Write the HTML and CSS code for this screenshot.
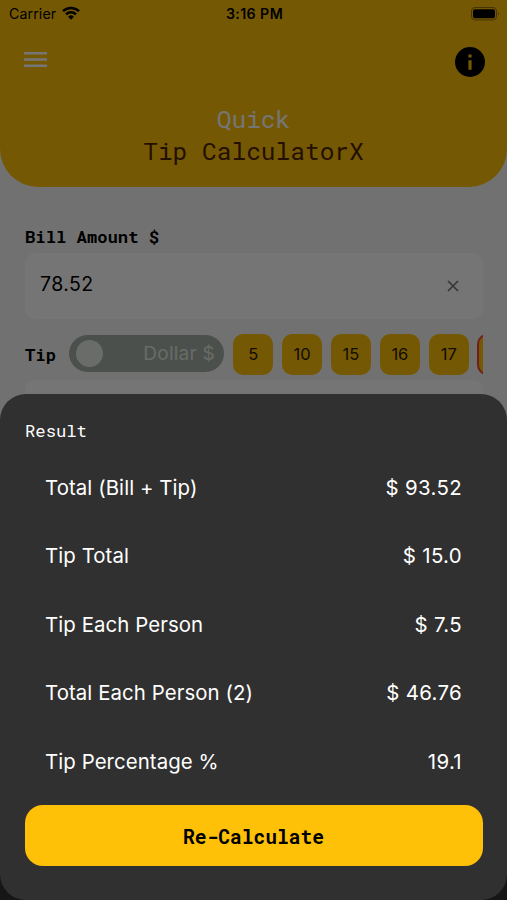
FILE: index.html
```
<!DOCTYPE html>
<html lang="en">
<head>
    <meta charset="UTF-8">
    <title>Quick Tip CalculatorX</title>
    <link rel="stylesheet" href="styles.css">
</head>
<body>
<header class="header">
    <div class="status-bar">
        <div class="carrier">
            <span>Carrier</span>
            <svg class="wifi" viewBox="0 0 18 14">
                <g fill="none" stroke="#000" stroke-width="2.5">
                    <path d="M1 5.2a11.4 11.4 0 0 1 16 0"/>
                    <path d="M4 8.3a7.1 7.1 0 0 1 10 0"/>
                </g>
                <path d="M9 13.7l-2.9-3a4.1 4.1 0 0 1 5.8 0z"/>
            </svg>
        </div>
        <span class="time">3:16 PM</span>
        <svg class="battery" viewBox="0 0 29 14">
            <rect x=".5" y=".5" width="25" height="12.5" rx="3.5" fill="none" stroke="#000" stroke-opacity=".4"/>
            <rect x="2" y="2.2" width="22" height="9" rx="2"/>
            <path d="M27 4.8q1.6 2 0 4z" opacity=".5"/>
        </svg>
    </div>
    <nav class="nav">
        <svg class="menu-icon" viewBox="0 0 23 16">
            <path d="M0 1.3h23M0 7.5h23M0 13.7h23" stroke="#fff" stroke-width="2.6"/>
        </svg>
        <svg class="info-icon" viewBox="0 0 30 30">
            <circle cx="15" cy="15" r="15"/>
            <path d="M13.4 7.4h3.2v3h-3.2zM13.4 13.2h3.2v9.6h-3.2z" fill="#ffc107"/>
        </svg>
    </nav>
    <h1 class="title"><span>Quick</span><br>Tip CalculatorX</h1>
</header>

<main class="form">
    <label class="label">Bill Amount $</label>
    <div class="field">
        <span>78.52</span>
        <svg class="clear" viewBox="0 0 12 12">
            <path d="M1 1l10 10M11 1L1 11" fill="none" stroke="#777" stroke-width="1.7"/>
        </svg>
    </div>
    <div class="tip-row">
        <span class="label">Tip</span>
        <div class="toggle">
            <span class="knob"></span>
            <span>Dollar $</span>
        </div>
        <div class="chips">
            <button class="chip">5</button>
            <button class="chip">10</button>
            <button class="chip">15</button>
            <button class="chip">16</button>
            <button class="chip">17</button>
            <button class="chip selected"></button>
        </div>
    </div>
    <div class="field"></div>
</main>
<footer class="footer"></footer>

<div class="overlay">
    <section class="sheet">
        <h2 class="sheet-title">Result</h2>
        <div class="results">
            <div class="row"><span>Total (Bill + Tip)</span><span class="value">$ 93.52</span></div>
            <div class="row"><span>Tip Total</span><span class="value">$ 15.0</span></div>
            <div class="row"><span>Tip Each Person</span><span class="value">$ 7.5</span></div>
            <div class="row"><span>Total Each Person (2)</span><span class="value">$ 46.76</span></div>
            <div class="row"><span>Tip Percentage %</span><span class="value">19.1</span></div>
        </div>
        <button class="recalculate">Re-Calculate</button>
    </section>
</div>
</body>
</html>
```
FILE: styles.css
```
* {
    box-sizing: border-box;
}

body {
    display: flex;
    flex-direction: column;
    margin: 0;
    height: 900px;
    overflow: hidden;
    background-color: #f7f7f7;
    font-family: Inter, "Liberation Sans", sans-serif;
}

button {
    border: none;
    padding: 0;
    font-family: inherit;
}

.header {
    height: 187px;
    background-color: #ffc107;
    border-radius: 0 0 38px 38px;
}

.status-bar {
    display: grid;
    grid-template-columns: 1fr auto 1fr;
    align-items: center;
    height: 27px;
    padding: 0 7px 0 9px;
    font-size: 14.2px;
}

.carrier {
    display: flex;
    align-items: center;
    gap: 6px;
    letter-spacing: 0.1px;
}

.wifi {
    width: 18px;
    height: 14px;
    margin-bottom: 1px;
}

.time {
    font-weight: 600;
    letter-spacing: 0.4px;
}

.battery {
    width: 29px;
    height: 14px;
    justify-self: end;
}

.nav {
    display: flex;
    justify-content: space-between;
    align-items: center;
    padding: 20px 22px 0 24px;
}

.menu-icon {
    width: 23px;
    height: 16px;
    margin-bottom: 4px;
}

.info-icon {
    width: 30px;
    height: 30px;
}

.title {
    margin: 26px 0 0;
    font-family: "Roboto Mono", "DejaVu Sans Mono", monospace;
    font-size: 24.5px;
    font-weight: 400;
    line-height: 32px;
    text-align: center;
    color: #4e2400;
}

.title span {
    color: #fff;
}

.form {
    flex: 1;
    padding: 39px 24px 0 25px;
}

.footer {
    height: 30px;
    background-color: #303030;
}

.label {
    display: block;
    font-family: "Roboto Mono", "DejaVu Sans Mono", monospace;
    font-size: 17.2px;
    font-weight: 700;
    line-height: 22px;
}

.field {
    display: flex;
    justify-content: space-between;
    align-items: center;
    height: 66px;
    margin-top: 5px;
    padding: 0 24px 4px 15px;
    border-radius: 10px;
    background-color: #fff;
    font-size: 19.5px;
    letter-spacing: 0.4px;
}

.clear {
    width: 12px;
    height: 12px;
    margin-top: 4px;
}

.tip-row {
    display: flex;
    align-items: center;
    height: 41px;
    margin-top: 15px;
}

.toggle {
    display: flex;
    justify-content: space-between;
    align-items: center;
    flex: none;
    width: 155px;
    height: 37px;
    margin: 0 9px 2px 13px;
    padding: 0 9px 0 7px;
    border-radius: 19px;
    background-color: #a5aea5;
    color: #e4e8e0;
    font-size: 19px;
    letter-spacing: 0.25px;
}

.knob {
    width: 27px;
    height: 27px;
    border-radius: 50%;
    background-color: #e6ece8;
}

.chips {
    display: flex;
    flex: 1;
    gap: 8.4px;
    overflow: hidden;
}

.chip {
    flex: none;
    width: 40.5px;
    height: 41px;
    padding-bottom: 2px;
    border-radius: 10px;
    background-color: #ffc107;
    color: #2b1800;
    font-size: 16.5px;
}

.chip.selected {
    border: 2px solid #f44336;
}

.overlay {
    position: fixed;
    inset: 0;
    display: flex;
    align-items: flex-end;
    background-color: rgba(0, 0, 0, 0.54);
}

.sheet {
    width: 100%;
    height: 506px;
    padding: 26px 24px 0 25px;
    border-radius: 26px;
    background-color: #303030;
    color: #fff;
}

.sheet-title {
    margin: 0;
    font-family: "Roboto Mono", "DejaVu Sans Mono", monospace;
    font-size: 17.2px;
    font-weight: 400;
    line-height: 22px;
}

.results {
    padding: 11px 21px 0 20px;
}

.row {
    display: flex;
    justify-content: space-between;
    align-items: center;
    height: 68.5px;
    font-size: 20.4px;
    letter-spacing: 0.08px;
}

.value {
    letter-spacing: 0.35px;
}

.recalculate {
    width: 100%;
    height: 61px;
    margin-top: 9px;
    padding: 1px 1px 0 0;
    border-radius: 18px;
    background-color: #ffc107;
    color: #000;
    font-family: "Roboto Mono", "DejaVu Sans Mono", monospace;
    font-size: 19.6px;
    font-weight: 700;
}
```
